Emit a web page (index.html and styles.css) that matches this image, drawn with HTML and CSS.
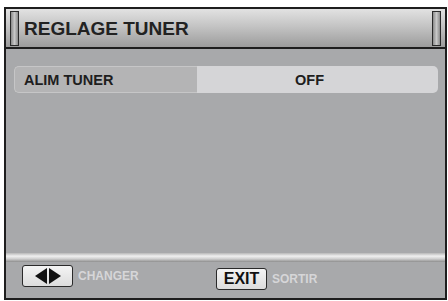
FILE: index.html
```html
<!DOCTYPE html>
<html>
<head>
    <title>Reglage Tuner</title>
    <link rel="stylesheet" href="styles.css">
</head>
<body>
    <div class="screen">
        <div class="header">
            <span class="tab"></span>
            <h1>REGLAGE TUNER</h1>
            <span class="tab"></span>
        </div>

        <div class="content">
            <div class="menu-row">
                <div class="label">ALIM TUNER</div>
                <div class="value">OFF</div>
            </div>
        </div>

        <div class="separator"></div>

        <div class="footer">
            <div class="hint hint-change">
                <span class="key key-arrows">
                    <svg width="30" height="18" viewBox="0 0 30 18">
                        <polygon points="14,1 14,17 2,9" fill="#111"/>
                        <polygon points="16,1 16,17 28,9" fill="#111"/>
                    </svg>
                </span>
                <span class="hint-text">CHANGER</span>
            </div>
            <div class="hint hint-exit">
                <span class="key key-exit">EXIT</span>
                <span class="hint-text">SORTIR</span>
            </div>
        </div>
    </div>
</body>
</html>
```

FILE: styles.css
```css
* {
    box-sizing: border-box;
}

body {
    margin: 0;
    background-color: #fff;
    font-family: "Liberation Sans", Arial, sans-serif;
}

.screen {
    margin: 7px 0 0 4px;
    width: 443px;
    height: 293px;
    border: 2px solid #1e1e1e;
    background-color: #a8a9ab;
    display: flex;
    flex-direction: column;
}

.header {
    height: 40px;
    border-bottom: 2px solid #1e1e1e;
    background: linear-gradient(#e2e2e2, #c4c4c4 45%, #9c9c9c);
    display: flex;
    align-items: center;
    padding: 0 4px 0 4px;
}

.tab {
    width: 9px;
    height: 35px;
    border: 1px solid #2a2a2a;
    background: linear-gradient(to right, #8a8a8a, #c8c8c8 50%, #8a8a8a);
}

.header h1 {
    flex-grow: 1;
    margin: 2px 0 0 5px;
    font-size: 19px;
    font-weight: bold;
    color: #222;
}

.content {
    flex-grow: 1;
    padding: 17px 7px 0 8px;
}

.menu-row {
    display: flex;
    height: 27px;
    font-size: 14.5px;
    font-weight: bold;
    color: #1e1e1e;
}

.label {
    width: 183px;
    background-color: #b4b4b5;
    border: 1px solid #c6c6c7;
    border-right: none;
    border-radius: 5px 0 0 5px;
    display: flex;
    align-items: center;
    padding-left: 9px;
}

.value {
    flex-grow: 1;
    background-color: #d5d5d7;
    border-radius: 0 5px 5px 0;
    display: flex;
    align-items: center;
    justify-content: center;
    padding-right: 16px;
}

.separator {
    height: 9px;
    background: linear-gradient(#b8b8b8, #f0f0f0 35%, #cfcfcf 65%, #8e8e8e);
}

.footer {
    height: 36px;
    display: flex;
    font-size: 12px;
    font-weight: bold;
}

.hint {
    display: flex;
    align-items: center;
}

.hint-change {
    width: 210px;
    padding-left: 16px;
    margin-top: 3px;
    align-self: flex-start;
}

.hint-exit {
    align-self: flex-start;
    margin-top: 6px;
}

.key {
    height: 22px;
    border: 1px solid #2a2a2a;
    border-radius: 3px;
    background: linear-gradient(#f4f4f4, #dcdcdc);
    display: flex;
    align-items: center;
    justify-content: center;
}

.key-arrows {
    width: 51px;
}

.key-exit {
    width: 51px;
    font-size: 16px;
    color: #111;
}

.hint-text {
    margin-left: 5px;
    color: #d6d6d8;
}
```
